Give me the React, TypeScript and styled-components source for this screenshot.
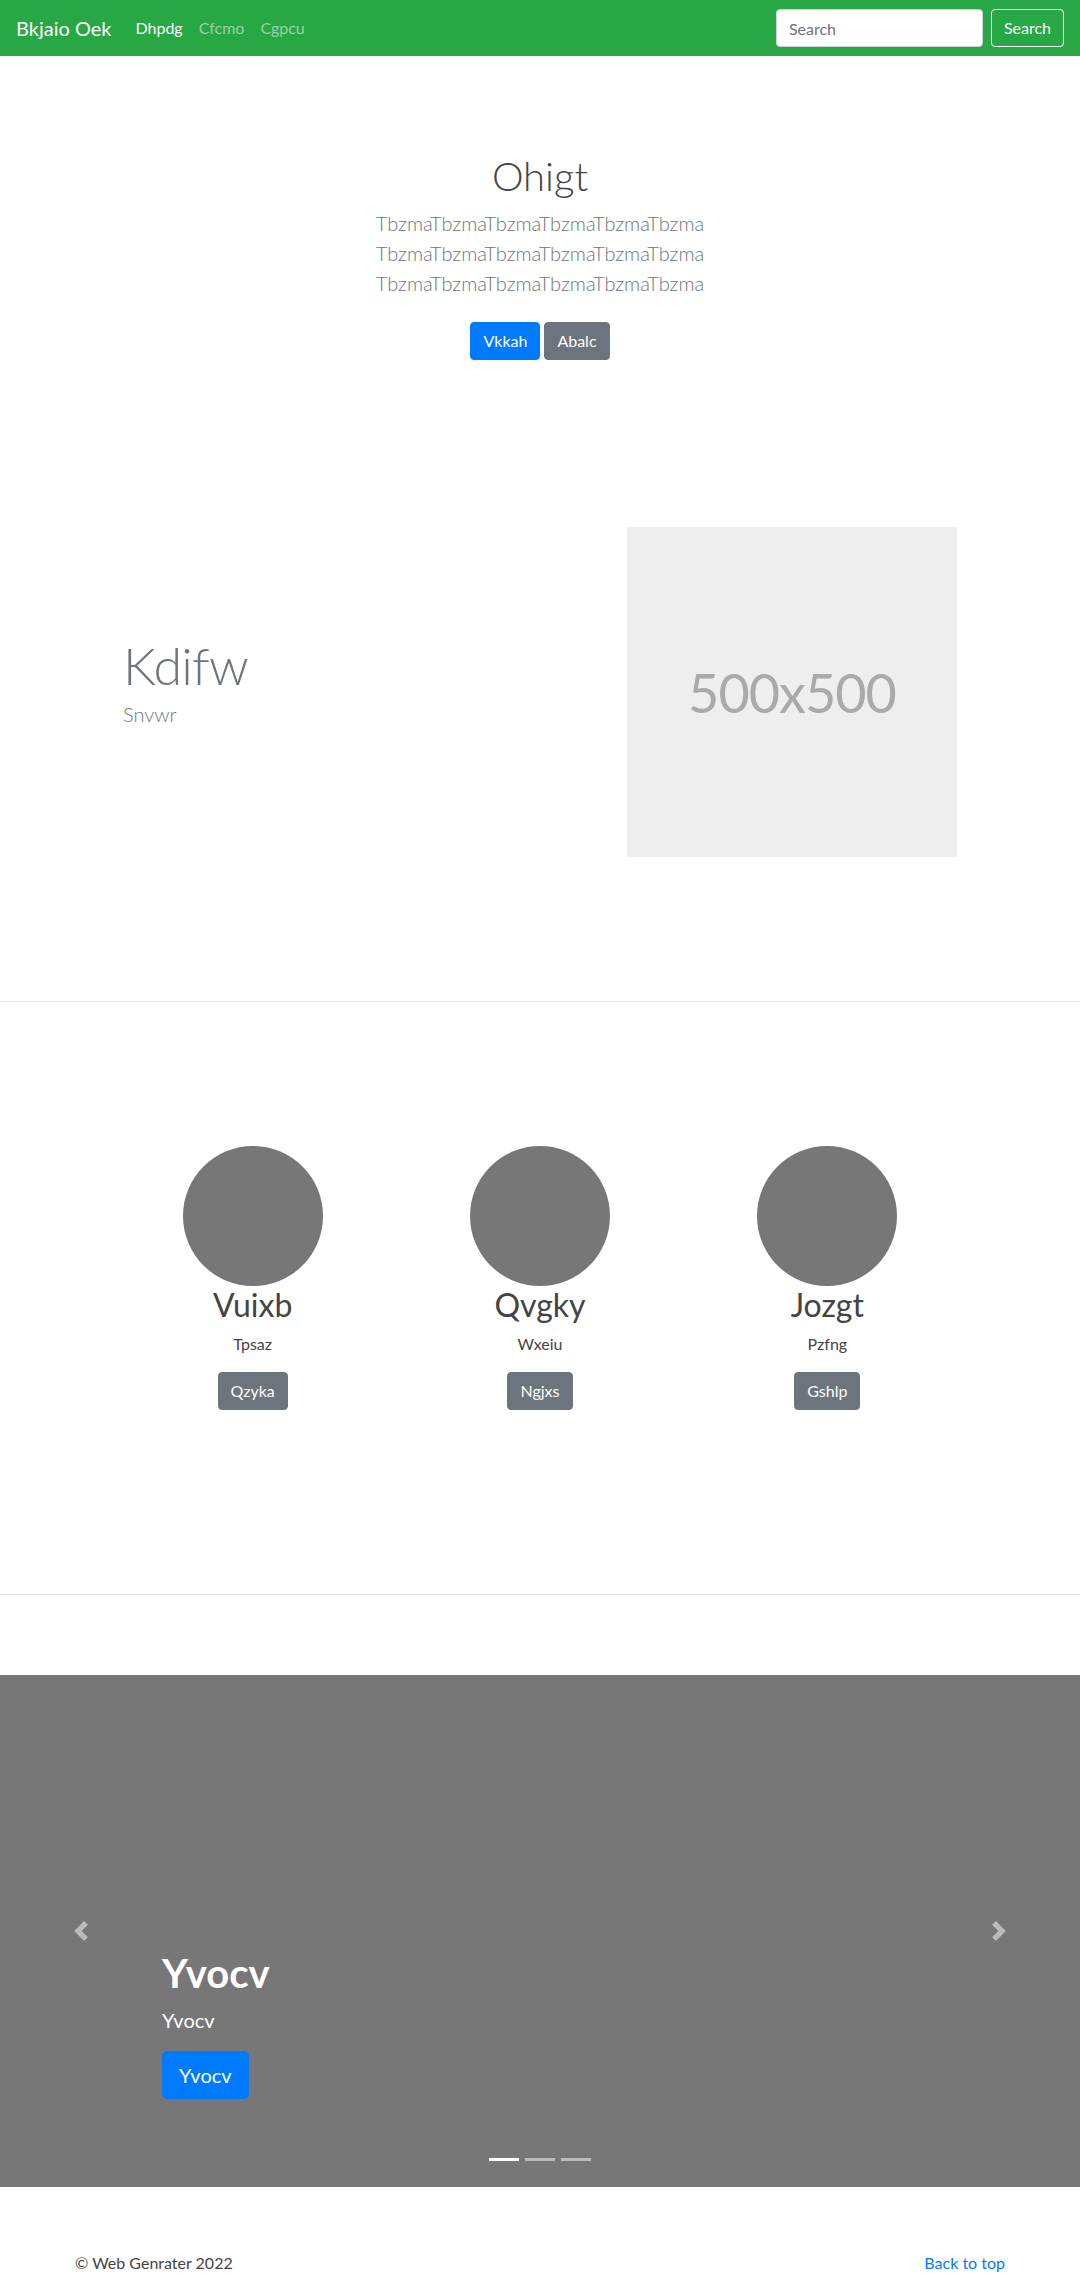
import React from "react";
import styled, { createGlobalStyle, css } from "styled-components";

const GlobalStyle = createGlobalStyle`
  *, *::before, *::after { box-sizing: border-box; }
  body {
    margin: 0;
    font-family: Lato, "Open Sans", "Liberation Sans", sans-serif;
    font-size: 16px;
    line-height: 1.5;
    color: #212529;
    background: #fff;
  }
`;

const Navbar = styled.nav`
  display: flex;
  align-items: center;
  justify-content: space-between;
  background: #28a745;
  padding: 8px 16px;
  height: 56px;
`;

const NavLeft = styled.div`
  display: flex;
  align-items: center;
`;

const Brand = styled.a`
  font-size: 20px;
  line-height: 30px;
  padding: 5px 0;
  margin-right: 16px;
  color: #fff;
  text-decoration: none;
`;

const NavList = styled.ul`
  display: flex;
  list-style: none;
  margin: 0;
  padding: 0;
`;

const NavLink = styled.a<{ $active?: boolean }>`
  display: block;
  padding: 8px;
  font-size: 16px;
  line-height: 24px;
  text-decoration: none;
  color: ${(p) => (p.$active ? "#fff" : "rgba(255,255,255,0.5)")};
`;

const SearchForm = styled.form`
  display: flex;
  align-items: center;
  gap: 8px;
`;

const SearchInput = styled.input`
  width: 207px;
  height: 38px;
  padding: 6px 12px;
  font-family: inherit;
  font-size: 16px;
  line-height: 24px;
  color: #495057;
  background: #fff;
  border: 1px solid #ced4da;
  border-radius: 4px;
  outline: none;
  &::placeholder { color: #6c757d; }
`;

const Button = styled.a<{ $variant: "primary" | "secondary" | "outline"; $size?: "lg" }>`
  display: inline-block;
  font-family: inherit;
  font-size: 16px;
  line-height: 24px;
  padding: 6px 12px;
  border-radius: 4px;
  border: 1px solid transparent;
  text-decoration: none;
  text-align: center;
  cursor: pointer;
  ${(p) =>
    p.$variant === "primary" &&
    css`
      background: #007bff;
      border-color: #007bff;
      color: #fff;
    `}
  ${(p) =>
    p.$variant === "secondary" &&
    css`
      background: #6c757d;
      border-color: #6c757d;
      color: #fff;
    `}
  ${(p) =>
    p.$variant === "outline" &&
    css`
      background: transparent;
      border-color: #f8f9fa;
      color: #f8f9fa;
    `}
  ${(p) =>
    p.$size === "lg" &&
    css`
      font-size: 20px;
      line-height: 30px;
      padding: 8px 16px;
      border-radius: 5px;
    `}
`;

const Hero = styled.section`
  padding: 96px 0 95px;
  text-align: center;
`;

const HeroTitle = styled.h1`
  margin: 0 0 8px;
  font-size: 40px;
  font-weight: 300;
  line-height: 1.2;
  color: #454545;
`;

const Lead = styled.p<{ $center?: boolean }>`
  margin: 0 0 16px;
  font-size: 20px;
  font-weight: 300;
  line-height: 30px;
  color: #6c757d;
  ${(p) =>
    p.$center &&
    css`
      max-width: 540px;
      margin-left: auto;
      margin-right: auto;
    `}
`;

const ButtonRow = styled.div`
  margin: 0;
  padding: 8px 0;
  display: flex;
  justify-content: center;
  gap: 4px;
`;

const Featurette = styled.section`
  padding: 64px 0;
`;

const FeatureRow = styled.div`
  max-width: 834px;
  margin: 0 auto;
  display: flex;
  align-items: center;
  justify-content: space-between;
`;

const FeatureText = styled.div`
  flex: 1;
`;

const FeatureHeading = styled.h2`
  margin: 0 0 8px;
  font-size: 52px;
  font-weight: 300;
  line-height: 1;
  letter-spacing: -0.8px;
  color: #6c757d;
`;

const Placeholder = styled.div`
  width: 330px;
  height: 330px;
  background: #eee;
  color: #aaa;
  display: flex;
  align-items: center;
  justify-content: center;
  font-size: 54px;
  letter-spacing: -1px;
`;

const Divider = styled.hr`
  margin: 80px 0;
  border: 0;
  border-top: 1px solid rgba(0, 0, 0, 0.1);
  height: 0;
`;

const Marketing = styled.section`
  padding: 64px 0;
`;

const MarketingGrid = styled.div`
  max-width: 862px;
  margin: 0 auto;
  display: grid;
  grid-template-columns: repeat(3, 1fr);
`;

const MarketingCol = styled.div`
  text-align: center;
  margin-bottom: 24px;
`;

const Circle = styled.div`
  width: 140px;
  height: 140px;
  border-radius: 50%;
  background: #777;
  margin: 0 auto;
`;

const ColTitle = styled.h2`
  margin: 0 0 8px;
  font-size: 32px;
  font-weight: 400;
  line-height: 1.2;
  color: #444;
`;

const ColText = styled.p`
  margin: 0 12px 16px;
  color: #444;
`;

const Carousel = styled.div`
  position: relative;
  height: 512px;
  background: #777;
  display: flex;
  flex-direction: column;
  justify-content: flex-end;
  padding: 0 15% 72px;
  color: #fff;
`;

const CaptionTitle = styled.h1`
  margin: 0 0 8px;
  font-size: 40px;
  font-weight: 700;
  line-height: 1.2;
`;

const CaptionText = styled.p`
  margin: 0 0 16px;
  font-size: 20px;
  line-height: 30px;
`;

const CaptionAction = styled.p`
  margin: 0 0 16px;
`;

const Control = styled.a<{ $side: "left" | "right" }>`
  position: absolute;
  top: 0;
  bottom: 0;
  ${(p) => (p.$side === "left" ? "left: 0;" : "right: 0;")}
  width: 15%;
  display: flex;
  align-items: center;
  justify-content: center;
  opacity: 0.5;
`;

const Indicators = styled.ol`
  position: absolute;
  left: 0;
  right: 0;
  bottom: 0;
  display: flex;
  justify-content: center;
  list-style: none;
  margin: 0 0 16px;
  padding: 0;
`;

const Indicator = styled.li<{ $active?: boolean }>`
  width: 30px;
  height: 3px;
  margin: 0 3px;
  box-sizing: content-box;
  border-top: 10px solid transparent;
  border-bottom: 10px solid transparent;
  background: #fff;
  background-clip: padding-box;
  opacity: ${(p) => (p.$active ? 1 : 0.5)};
`;

const Footer = styled.footer`
  max-width: 960px;
  margin: 64px auto 0;
  padding: 0 15px;
  display: flex;
  justify-content: space-between;
`;

const FooterText = styled.p`
  margin: 0 0 16px;
  color: #444;
`;

const FooterLink = styled.a`
  color: #007bff;
  text-decoration: none;
`;

const Chevron = ({ dir }: { dir: "prev" | "next" }) => (
  <svg width="20" height="20" viewBox="0 0 8 8" fill="#fff">
    <path
      d={
        dir === "prev"
          ? "M5.25 0l-4 4 4 4 1.5-1.5L4.25 4l2.5-2.5L5.25 0z"
          : "M2.75 0l-1.5 1.5L3.75 4l-2.5 2.5L2.75 8l4-4-4-4z"
      }
    />
  </svg>
);

const cols = [
  { title: "Vuixb", text: "Tpsaz", btn: "Qzyka" },
  { title: "Qvgky", text: "Wxeiu", btn: "Ngjxs" },
  { title: "Jozgt", text: "Pzfng", btn: "Gshlp" },
];

const group = "TbzmaTbzmaTbzmaTbzmaTbzmaTbzma";

export default function App() {
  return (
    <>
      <GlobalStyle />
      <Navbar>
        <NavLeft>
          <Brand href="#">Bkjaio Oek</Brand>
          <NavList>
            <li><NavLink $active href="#">Dhpdg</NavLink></li>
            <li><NavLink href="#">Cfcmo</NavLink></li>
            <li><NavLink href="#">Cgpcu</NavLink></li>
          </NavList>
        </NavLeft>
        <SearchForm onSubmit={(e) => e.preventDefault()}>
          <SearchInput type="search" placeholder="Search" />
          <Button as="button" type="submit" $variant="outline">Search</Button>
        </SearchForm>
      </Navbar>

      <Hero>
        <HeroTitle>Ohigt</HeroTitle>
        <Lead $center>
          {group} {group} {group}
        </Lead>
        <ButtonRow>
          <Button $variant="primary" href="#">Vkkah</Button>
          <Button $variant="secondary" href="#">Abalc</Button>
        </ButtonRow>
      </Hero>

      <Featurette>
        <FeatureRow>
          <FeatureText>
            <FeatureHeading>Kdifw</FeatureHeading>
            <Lead>Snvwr</Lead>
          </FeatureText>
          <Placeholder>500x500</Placeholder>
        </FeatureRow>
      </Featurette>

      <Divider />

      <Marketing>
        <MarketingGrid>
          {cols.map((c) => (
            <MarketingCol key={c.title}>
              <Circle />
              <ColTitle>{c.title}</ColTitle>
              <ColText>{c.text}</ColText>
              <ColText>
                <Button $variant="secondary" href="#">{c.btn}</Button>
              </ColText>
            </MarketingCol>
          ))}
        </MarketingGrid>
      </Marketing>

      <Divider />

      <Carousel>
        <CaptionTitle>Yvocv</CaptionTitle>
        <CaptionText>Yvocv</CaptionText>
        <CaptionAction>
          <Button $variant="primary" $size="lg" href="#">Yvocv</Button>
        </CaptionAction>
        <Control $side="left" href="#"><Chevron dir="prev" /></Control>
        <Control $side="right" href="#"><Chevron dir="next" /></Control>
        <Indicators>
          <Indicator $active />
          <Indicator />
          <Indicator />
        </Indicators>
      </Carousel>

      <Footer>
        <FooterText>© Web Genrater 2022</FooterText>
        <FooterText>
          <FooterLink href="#">Back to top</FooterLink>
        </FooterText>
      </Footer>
    </>
  );
}
